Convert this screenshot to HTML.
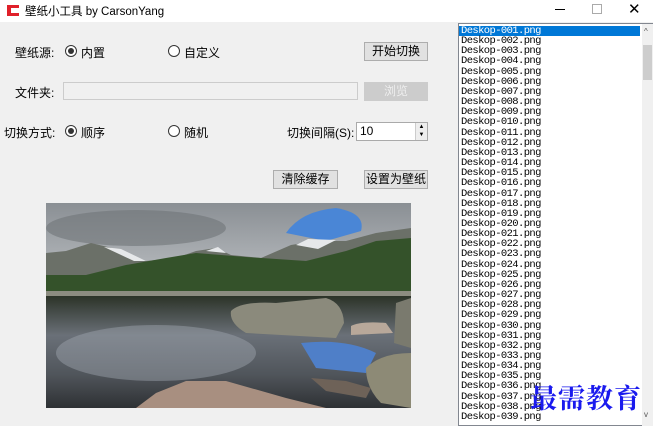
<!DOCTYPE html>
<html><head><meta charset="utf-8"><style>
*{margin:0;padding:0;box-sizing:border-box}
body{width:653px;height:426px;background:#f0f0f0;position:relative;overflow:hidden;font-family:"Liberation Sans","Noto Sans CJK SC",sans-serif;font-size:12px;color:#000}
.tb{position:absolute;left:0;top:0;width:653px;height:22px;background:#fff}
.a{position:absolute;white-space:nowrap}
.btn{position:absolute;background:#e1e1e1;border:1px solid #adadad;text-align:center;line-height:17px;font-size:12px}
.rad{position:absolute;width:12px;height:12px;border:1px solid #333;border-radius:50%;background:#fff}
.rad.on::after{content:"";position:absolute;left:2px;top:2px;width:6px;height:6px;border-radius:50%;background:#333}
.list{position:absolute;left:458px;top:23px;width:195px;height:403px;background:#fff;border:1px solid #828790;padding-top:2px;overflow:hidden}
.list div{font-family:"Liberation Mono","Noto Serif CJK SC",monospace;font-size:10.5px;height:10.16px;line-height:10.16px;padding-left:2px;letter-spacing:-0.6px;width:181px}
.sb{position:absolute;left:642px;top:24px;width:11px;height:402px;background:#f0f0f0}
</style></head><body>
<div class="tb"></div>
<div class="a" style="left:7px;top:5px;width:12px;height:11px;background:#e0202a"></div>
<div class="a" style="left:11px;top:8px;width:8px;height:5px;background:#fff"></div>
<div class="a" style="left:25px;top:3px;font-size:11.5px">壁纸小工具 by CarsonYang</div>
<div class="a" style="left:555px;top:9px;width:10px;height:1px;background:#000"></div>
<div class="a" style="left:592px;top:4px;width:10px;height:10px;border:1px solid #aaa"></div>
<div class="a" style="left:628px;top:0px;font-size:15px">✕</div>

<div class="a" style="left:15px;top:44px">壁纸源:</div>
<div class="rad on" style="left:65px;top:45px"></div><div class="a" style="left:81px;top:44px">内置</div>
<div class="rad" style="left:168px;top:45px"></div><div class="a" style="left:184px;top:44px">自定义</div>
<div class="btn" style="left:364px;top:42px;width:64px;height:19px">开始切换</div>

<div class="a" style="left:15px;top:84px">文件夹:</div>
<div class="a" style="left:63px;top:82px;width:295px;height:18px;background:#f0f0f0;border:1px solid #ccc"></div>
<div class="btn" style="left:364px;top:82px;width:64px;height:19px;background:#ccc;border-color:#ccc;color:#eee">浏览</div>

<div class="a" style="left:4px;top:124px">切换方式:</div>
<div class="rad on" style="left:65px;top:125px"></div><div class="a" style="left:81px;top:124px">顺序</div>
<div class="rad" style="left:168px;top:125px"></div><div class="a" style="left:184px;top:124px">随机</div>
<div class="a" style="left:287px;top:124px">切换间隔(S):</div>
<div class="a" style="left:356px;top:122px;width:72px;height:19px;background:#fff;border:1px solid #aaa;padding-left:3px;line-height:16px">10</div>
<div class="a" style="left:415px;top:123px;width:12px;height:17px;background:#eee;border-left:1px solid #ccc;font-size:6px;text-align:center;line-height:8px">▲<br>▼</div>

<div class="btn" style="left:273px;top:170px;width:65px;height:19px">清除缓存</div>
<div class="btn" style="left:364px;top:170px;width:64px;height:19px">设置为壁纸</div>

<svg class="a" style="left:46px;top:203px" width="365" height="205" viewBox="0 0 365 205">
<defs>
<linearGradient id="sky" x1="0" y1="0" x2="0" y2="1"><stop offset="0" stop-color="#8a8f94"/><stop offset=".5" stop-color="#c8cbce"/><stop offset="1" stop-color="#e8e9eb"/></linearGradient>
<linearGradient id="lake" x1="0" y1="0" x2="0" y2="1"><stop offset="0" stop-color="#2c3328"/><stop offset=".35" stop-color="#6a7078"/><stop offset=".7" stop-color="#50555b"/><stop offset="1" stop-color="#2e3134"/></linearGradient>
</defs>
<rect width="365" height="205" fill="url(#sky)"/>
<ellipse cx="90" cy="25" rx="90" ry="18" fill="#6f7478" opacity=".6"/>
<path d="M240 30 Q255 8 290 5 Q320 10 315 28 L280 38 Z" fill="#4a86d6"/>
<path d="M0 50 L20 48 L45 40 L70 46 L100 58 L130 55 L150 48 L170 45 L185 52 L215 55 L245 42 L270 38 L300 38 L330 30 L365 25 L365 100 L0 100 Z" fill="#6b7068"/>
<path d="M58 44 L75 46 L100 58 L88 58 Z M250 42 L262 36 L290 37 L272 46 Z M160 48 L172 44 L180 50 Z" fill="#e6e8ea"/>
<path d="M0 72 L40 72 L80 62 L120 55 L150 50 L200 54 L260 58 L300 48 L330 38 L365 35 L365 92 L0 92 Z" fill="#34522a"/>
<rect x="0" y="88" width="365" height="5" fill="#8c8c80"/>
<rect x="0" y="93" width="365" height="112" fill="url(#lake)"/>
<ellipse cx="110" cy="150" rx="100" ry="28" fill="#a0a7b0" opacity=".45"/>
<path d="M255 140 Q300 135 330 150 L320 170 L270 165 Z" fill="#4f7fc8"/>
<path d="M185 108 Q195 98 230 100 L280 95 Q297 100 298 120 L290 135 L200 130 Q183 120 185 108 Z" fill="#8b8a7c"/>
<path d="M305 123 Q315 118 340 120 L347 130 L305 132 Z" fill="#b8a89a"/>
<path d="M350 100 L365 95 L365 145 L348 140 Z" fill="#7a7a6e"/>
<path d="M320 165 Q335 150 365 150 L365 205 L335 200 Q320 185 320 165 Z" fill="#8d8a76"/>
<path d="M90 205 L110 190 L140 178 L180 178 L240 195 L280 205 Z" fill="#a88f80"/>
<path d="M265 175 L300 178 L325 185 L320 195 L280 188 Z" fill="#6e6258"/>
</svg>

<div class="list" id="L"></div>
<div class="sb"></div>
<div class="a" style="left:643px;top:45px;width:9px;height:35px;background:#cdcdcd"></div>
<div class="a" style="left:644px;top:27px;font-size:8px;color:#555">^</div>
<div class="a" style="left:644px;top:410px;font-size:8px;color:#555">v</div>
<div class="a" style="left:530px;top:377px;font-family:'Noto Serif CJK SC',serif;font-weight:bold;font-size:27px;color:#1a1aee;letter-spacing:1px">最需教育</div>
<script>
var s="";for(var i=1;i<=39;i++){var n=("00"+i).slice(-3);s+='<div'+(i==1?' style="color:#fff;background:#0078d7"':'')+'>Deskop-'+n+'.png</div>';}
document.getElementById("L").innerHTML=s;
</script>
</body></html>
